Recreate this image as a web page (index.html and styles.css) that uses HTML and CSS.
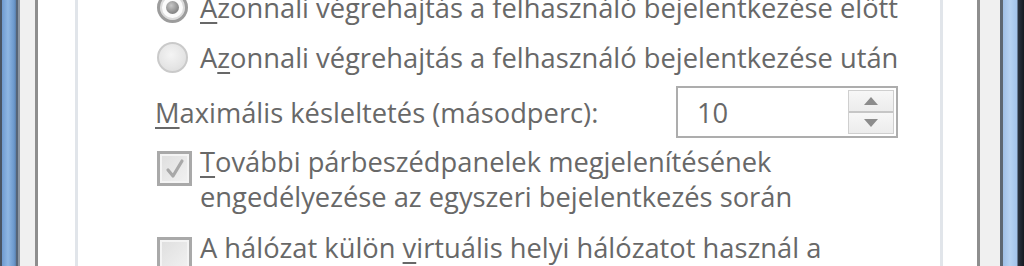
FILE: index.html
```html
<!DOCTYPE html>
<html lang="hu">
<head>
<meta charset="utf-8">
<link rel="stylesheet" href="styles.css">
</head>
<body>
<div class="window">
  <div class="frame-l"></div>
  <div class="face">
    <div class="page">
      <div class="group">
        <div class="list">
          <div class="row radio-row">
            <span class="radio checked"><span class="dot"></span></span>
            <span class="label"><u>A</u>zonnali végrehajtás a felhasználó bejelentkezése előtt</span>
          </div>
          <div class="row radio-row">
            <span class="radio"></span>
            <span class="label">A<u>z</u>onnali végrehajtás a felhasználó bejelentkezése után</span>
          </div>
          <div class="row spin-row">
            <span class="label spin-label"><u>M</u>aximális késleltetés (másodperc):</span>
            <div class="spin">
              <span class="spin-value">10</span>
              <div class="spin-btns">
                <span class="spin-btn"><svg width="14" height="8" viewBox="0 0 14 8"><path d="M7 0 L14 8 L0 8 Z" fill="#8c8c8c"/></svg></span>
                <span class="spin-btn"><svg width="14" height="8" viewBox="0 0 14 8"><path d="M0 0 L14 0 L7 8 Z" fill="#8c8c8c"/></svg></span>
              </div>
            </div>
          </div>
          <div class="row check-row">
            <span class="check"><svg width="22" height="22" viewBox="0 0 22 22"><path d="M4 12 L9 18 L18 3" fill="none" stroke="#a8a8a8" stroke-width="3.2" stroke-linecap="round" stroke-linejoin="round"/></svg></span>
            <span class="label"><u>T</u>ovábbi párbeszédpanelek megjelenítésének<br>engedélyezése az egyszeri bejelentkezés során</span>
          </div>
          <div class="row check-row">
            <span class="check"></span>
            <span class="label">A hálózat külön <u>v</u>irtuális helyi hálózatot használ a</span>
          </div>
        </div>
      </div>
    </div>
  </div>
  <div class="frame-r"></div>
</div>
</body>
</html>
```

FILE: styles.css
```css
html, body {
  margin: 0;
  padding: 0;
  background: #ffffff;
}

.window {
  display: flex;
  width: 1024px;
  height: 266px;
  overflow: hidden;
}

.frame-l {
  flex: 0 0 18px;
  background: linear-gradient(to right, #4a5564 0 2px, #6f9ad0 2px, #8fb7e4 8px, #6c99cd 14px, #5a7fab 16px, #566578 16px 18px);
}

.frame-r {
  flex: 0 0 21px;
  background: linear-gradient(to right, #9fbfe6 0, #b6d2f2 7px, #a3c3ea 14px, #2b3340 15px, #14181f 21px);
}

.face {
  flex: 1;
  display: flex;
  background: #f0f0f0;
  border-left: 2px solid #8d96a1;
  border-right: 3px solid #5d6772;
  padding: 0 20px 0 15px;
}

.page {
  flex: 1;
  display: flex;
  background: #ffffff;
  border-left: 3px solid #8e8e8e;
  border-right: 3px solid #8e8e8e;
  padding: 0 34px 0 37px;
}

.group {
  flex: 1;
  border-left: 3px solid #e1e5ea;
  border-right: 3px solid #e1e5ea;
  padding: 0 0 0 79px;
}

.list {
  margin-top: -10px;
  display: flex;
  flex-direction: column;
  font-family: "Open Sans", "Noto Sans", sans-serif;
  font-size: 27.3px;
  line-height: 35px;
  color: #686868;
}

.label u {
  text-decoration-thickness: 2px;
  text-underline-offset: 4px;
}

.row {
  display: flex;
}

.radio-row {
  align-items: center;
  height: 35px;
  margin-bottom: 15px;
}

.radio {
  flex: 0 0 auto;
  width: 31px;
  height: 31px;
  box-sizing: border-box;
  border-radius: 50%;
  margin-right: 12px;
  border: 2px solid #cacaca;
  background: radial-gradient(circle at 45% 40%, #f4f4f4 0, #e6e6e6 55%, #d9d9d9 100%);
  display: flex;
  align-items: center;
  justify-content: center;
}

.radio.checked {
  border: 3px solid #9c9c9c;
  background: #fbfbfb;
  box-shadow: inset 0 0 0 2px #dcdcdc;
}

.dot {
  width: 13px;
  height: 13px;
  border-radius: 50%;
  background: radial-gradient(circle at 40% 35%, #c8c8c8 0, #8e8e8e 60%, #6e6e6e 100%);
}

.spin-row {
  align-items: center;
  height: 52px;
  margin-top: -4px;
  margin-bottom: 6px;
}

.spin-label {
  margin-left: -2px;
  width: 521px;
  flex: 0 0 auto;
}

.spin {
  width: 222px;
  height: 52px;
  box-sizing: border-box;
  border: 2px solid #adadad;
  background: #ffffff;
  display: flex;
  align-items: center;
  padding: 2px 2px 2px 19px;
}

.spin-value {
  flex: 1;
}

.spin-btns {
  align-self: stretch;
  width: 44px;
  display: flex;
  flex-direction: column;
  border: 1px solid #cfcfcf;
}

.spin-btn {
  flex: 1;
  display: flex;
  align-items: center;
  justify-content: center;
  background: linear-gradient(#f7f7f7, #ececec);
}

.spin-btn + .spin-btn {
  border-top: 2px solid #c6c6c6;
}

.check-row {
  align-items: flex-start;
  margin-bottom: 16px;
}

.check {
  flex: 0 0 auto;
  width: 35px;
  height: 35px;
  box-sizing: border-box;
  margin-top: 7px;
  margin-right: 8px;
  border: 3px solid #a9a9a9;
  box-shadow: inset 0 0 0 2px #f4f4f4;
  background: linear-gradient(135deg, #dedede, #f2f2f2);
  display: flex;
  align-items: center;
  justify-content: center;
}
```
